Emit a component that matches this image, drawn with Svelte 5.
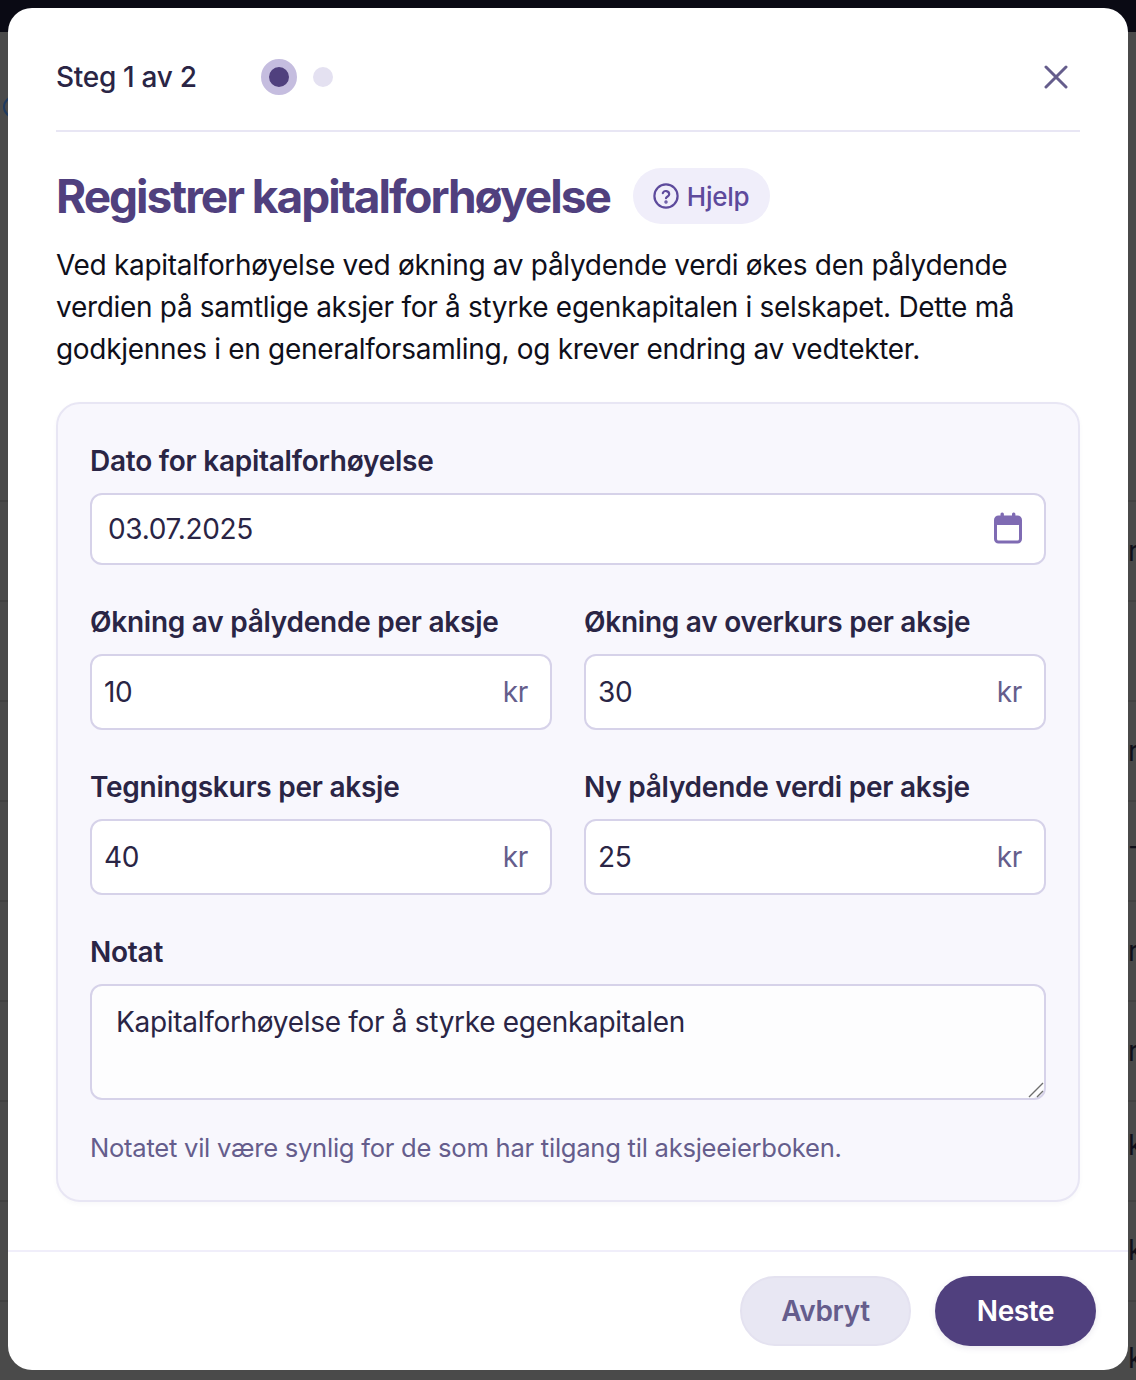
<script>
  const rows = [
    [{ label: 'Økning av pålydende per aksje', value: '10' }, { label: 'Økning av overkurs per aksje', value: '30' }],
    [{ label: 'Tegningskurs per aksje', value: '40' }, { label: 'Ny pålydende verdi per aksje', value: '25' }]
  ];
  const behind = [
    { y: 537, t: 'r' }, { y: 737, t: 'r' }, { y: 832, t: '-' }, { y: 937, t: 'r' },
    { y: 1037, t: 'r' }, { y: 1131, t: 'k' }, { y: 1236, t: 'k' }, { y: 1344, t: 'k' }
  ];
  const lines = [500, 600, 700, 800, 900, 1000, 1100, 1200, 1300];
</script>

<div class="page">
  <div class="topbar"></div>
  <div class="ring"></div>
  {#each lines as y}
    <i class="behind-line" style="top:{y}px"></i>
  {/each}
  {#each behind as b}
    <span class="behind" style="top:{b.y}px">{b.t}</span>
  {/each}

  <section class="modal">
    <div class="content">
      <header class="head">
        <div class="step">Steg 1 av 2</div>
        <div class="dots"><span class="dot on"></span><span class="dot"></span></div>
        <button class="close" aria-label="Lukk">
          <svg viewBox="0 0 24 24" width="24" height="24" fill="none" stroke="#655d8c" stroke-width="3" stroke-linecap="round"><path d="M2 2 L22 22 M22 2 L2 22"/></svg>
        </button>
      </header>

      <div class="titlerow">
        <h1>Registrer kapitalforhøyelse</h1>
        <button class="help">
          <svg viewBox="0 0 26 26" width="26" height="26" fill="none" stroke="#5d4a9c" stroke-width="2.2" stroke-linecap="round" stroke-linejoin="round"><circle cx="13" cy="13" r="11.6"/><path d="M9.8 10.2a3.3 3.3 0 0 1 6.4 1c0 2.2-3.2 2.7-3.2 4"/><circle cx="13" cy="19" r="0.6" fill="#5d4a9c"/></svg>
          Hjelp
        </button>
      </div>

      <p class="lead">Ved kapitalforhøyelse ved økning av pålydende verdi økes den pålydende verdien på samtlige aksjer for å styrke egenkapitalen i selskapet. Dette må godkjennes i en generalforsamling, og krever endring av vedtekter.</p>

      <div class="card">
        <div class="field">
          <span class="label">Dato for kapitalforhøyelse</span>
          <div class="input date">
            <span>03.07.2025</span>
            <svg class="cal" viewBox="0 0 28 32" width="28" height="32" fill="none"><rect x="1.5" y="5" width="25" height="25" rx="3" stroke="#7f6bb3" stroke-width="3"/><rect x="1.5" y="5" width="25" height="8" rx="2" fill="#7f6bb3"/><rect x="6.5" y="0.5" width="3.4" height="7" rx="1.5" fill="#7f6bb3"/><rect x="18" y="0.5" width="3.4" height="7" rx="1.5" fill="#7f6bb3"/></svg>
          </div>
        </div>

        {#each rows as row}
          <div class="two">
            {#each row as f}
              <div class="field">
                <span class="label">{f.label}</span>
                <div class="input num"><span>{f.value}</span><span class="unit">kr</span></div>
              </div>
            {/each}
          </div>
        {/each}

        <div class="field">
          <span class="label">Notat</span>
          <div class="input area">
            Kapitalforhøyelse for å styrke egenkapitalen
            <svg class="grip" viewBox="0 0 16 16" width="16" height="16" stroke="#6e6e6e" stroke-width="1.4"><path d="M1 15 L15 1 M9 15 L15 9"/></svg>
          </div>
        </div>
        <p class="hint">Notatet vil være synlig for de som har tilgang til aksjeeierboken.</p>
      </div>
    </div>

    <footer class="foot">
      <button class="btn ghost">Avbryt</button>
      <button class="btn primary">Neste</button>
    </footer>
  </section>
</div>

<style>
  :global(body) {
    margin: 0;
    background: #4a4a4a;
    font-family: Inter, "Liberation Sans", sans-serif;
  }
  .page {
    position: relative;
    width: 1136px;
    height: 1380px;
    overflow: hidden;
    padding: 8px 8px 10px;
    box-sizing: border-box;
    background: #4a4a4a;
  }
  .topbar {
    position: absolute;
    inset: 0 0 auto 0;
    height: 32px;
    background: #0a0a14;
  }
  .ring {
    position: absolute;
    left: 3px;
    top: 96px;
    width: 22px;
    height: 22px;
    border: 2px solid #1f3a5f;
    border-radius: 50%;
    box-sizing: border-box;
  }
  .behind {
    position: absolute;
    left: 1128px;
    font-size: 28px;
    line-height: 28px;
    color: #0f0f1a;
  }
  .behind-line {
    position: absolute;
    left: 0;
    right: 0;
    height: 2px;
    background: #424242;
  }
  .modal {
    position: relative;
    width: 1120px;
    height: 1362px;
    background: #fff;
    border-radius: 24px;
    display: flex;
    flex-direction: column;
    justify-content: space-between;
  }
  .content {
    padding: 0 48px;
  }
  .head {
    display: flex;
    align-items: center;
    box-sizing: border-box;
    height: 124px;
    border-bottom: 2px solid #e8e6f4;
    padding-top: 16px;
  }
  .step {
    font-size: 28px;
    font-weight: 500;
    color: #2a2545;
    letter-spacing: -0.3px;
    width: 205px;
  }
  .dots {
    display: flex;
    align-items: center;
    gap: 16px;
  }
  .dot {
    width: 20px;
    height: 20px;
    border-radius: 50%;
    background: #e4e1f1;
  }
  .dot.on {
    background: #50407e;
    border: 8px solid #c5bddf;
  }
  .close {
    margin-left: auto;
    margin-right: 12px;
    width: 24px;
    height: 24px;
    padding: 0;
    border: 0;
    background: none;
    display: flex;
  }
  .titlerow {
    display: flex;
    align-items: center;
    gap: 23px;
    margin-top: 36px;
    height: 56px;
  }
  h1 {
    margin: 0;
    font-size: 46px;
    font-weight: 700;
    letter-spacing: -2px;
    line-height: 56px;
    color: #50407e;
    white-space: nowrap;
  }
  .help {
    display: flex;
    align-items: center;
    gap: 8px;
    height: 56px;
    padding: 0 21px 0 20px;
    border: 0;
    border-radius: 28px;
    background: #f0eefa;
    color: #5d4a9c;
    font: 500 26px Inter, sans-serif;
    letter-spacing: -0.25px;
  }
  .lead {
    margin: 20px 0 0;
    font-size: 28px;
    line-height: 42px;
    letter-spacing: -0.31px;
    color: #0f0f1a;
  }
  .card {
    margin-top: 32px;
    padding: 35px 32px 0;
    height: 800px;
    box-sizing: border-box;
    border: 2px solid #e8e6f4;
    border-radius: 24px;
    background: #f8f7fd;
    box-shadow: 0 2px 4px rgba(80, 64, 126, 0.04);
    display: flex;
    flex-direction: column;
    gap: 35px;
  }
  .field {
    display: flex;
    flex-direction: column;
    min-width: 0;
  }
  .label {
    font-size: 28px;
    line-height: 44px;
    font-weight: 600;
    letter-spacing: -0.25px;
    color: #2a2545;
    white-space: nowrap;
    margin-bottom: 10px;
  }
  .input {
    box-sizing: border-box;
    background: #fff;
    border: 2px solid #d6d2e9;
    border-radius: 12px;
    color: #2a2545;
    font-size: 28px;
    letter-spacing: -0.3px;
    display: flex;
    align-items: center;
    justify-content: space-between;
  }
  .date {
    height: 72px;
    padding: 0 22px 0 16px;
  }
  .cal {
    margin-top: -2px;
  }
  .num {
    height: 76px;
    padding: 0 22px 0 12px;
  }
  .unit {
    color: #655d8c;
  }
  .two {
    display: grid;
    grid-template-columns: 1fr 1fr;
    gap: 32px;
  }
  .area {
    position: relative;
    height: 116px;
    align-items: flex-start;
    padding: 19px 24px;
    line-height: 34px;
    justify-content: flex-start;
    background: #fdfdfe;
  }
  .grip {
    position: absolute;
    right: 0;
    bottom: 0;
  }
  .hint {
    margin: -7px 0 0;
    font-size: 25.6px;
    letter-spacing: -0.26px;
    line-height: 40px;
    color: #655d8c;
  }
  .foot {
    display: flex;
    justify-content: flex-end;
    gap: 24px;
    padding: 24px 32px 24px 0;
    border-top: 2px solid #f0eefa;
  }
  .btn {
    height: 70px;
    border-radius: 35px;
    font: 600 28px Inter, sans-serif;
    letter-spacing: -0.4px;
    border: 0;
    padding: 0;
  }
  .ghost {
    width: 171px;
    background: #e8e7f3;
    border: 2px solid #e4e2f0;
    color: #655d8c;
  }
  .primary {
    width: 161px;
    background: #50407e;
    color: #fff;
    box-shadow: 0 2px 6px rgba(80, 64, 126, 0.12);
  }
</style>
